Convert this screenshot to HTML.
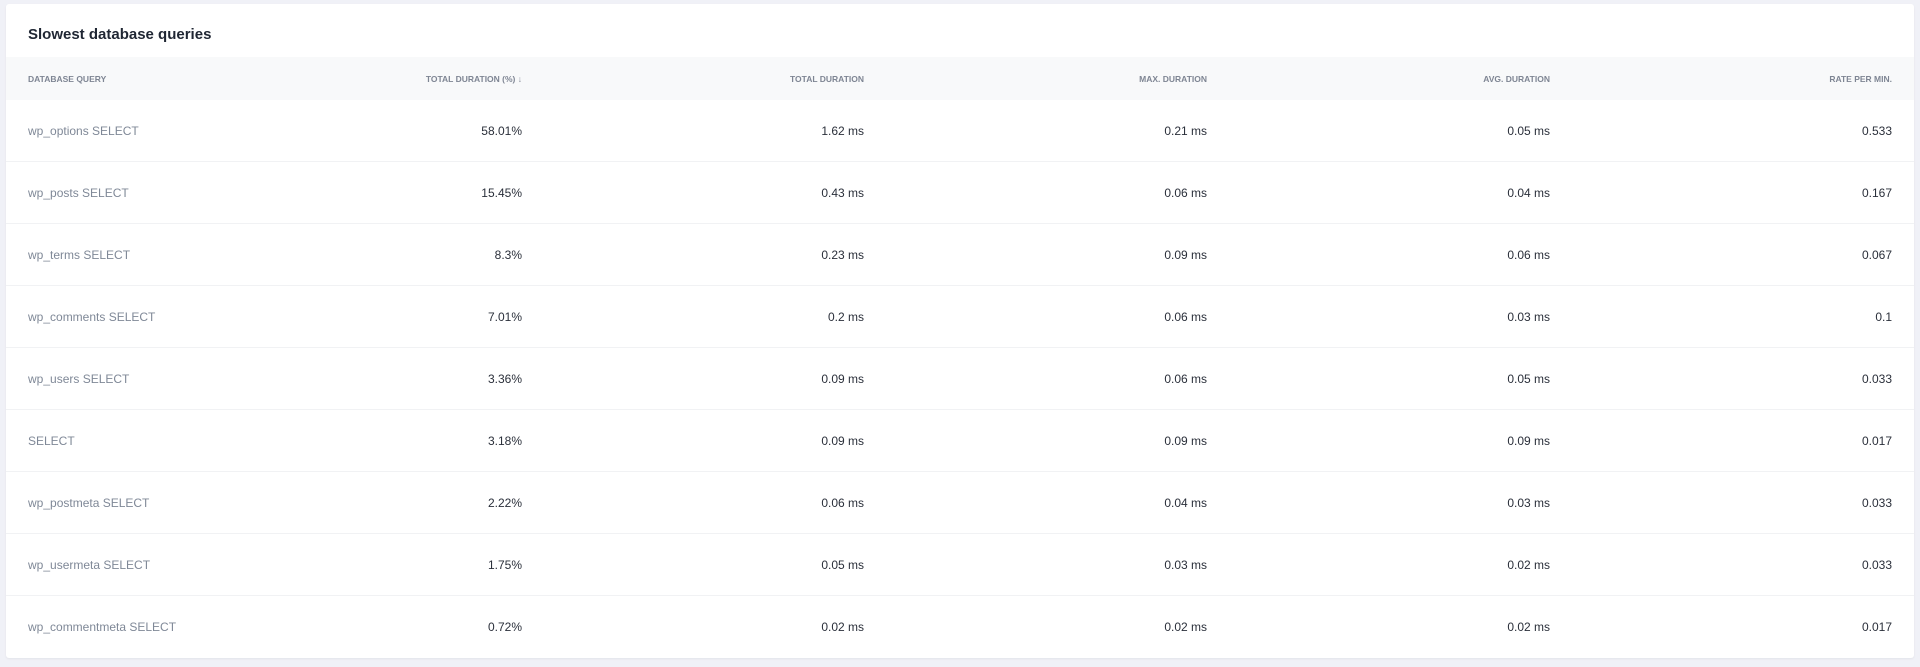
<!DOCTYPE html><html><head><style>
body{margin:0;background:#f0f1f7;width:1920px;height:667px;font-family:"Liberation Sans",sans-serif;overflow:hidden}
.card{position:absolute;left:6px;top:4px;width:1908px;height:654px;background:#fff;border-radius:3px;box-shadow:0 1px 2px rgba(0,0,0,.06)}
h1{margin:0;position:absolute;left:22px;top:22px;font-size:15px;font-weight:bold;color:#1f2633}
table{position:absolute;top:53px;left:0;width:1908px;border-collapse:collapse}
th{height:43px;background:#f8f9fa;font-size:8.5px;font-weight:bold;color:#7e8593;text-transform:uppercase;text-align:right;padding:0}
td{height:61px;border-bottom:1px solid #f1f2f4;font-size:12px;color:#2a2f3a;text-align:right;padding:0}
tr:last-child td{border-bottom:none}
th:first-child,td:first-child{text-align:left;padding-left:22px}
td:first-child{color:#7f8897}
th:last-child,td:last-child{padding-right:22px}
</style></head><body><div class="card"><h1>Slowest database queries</h1>
<table>
<colgroup><col style="width:200px"><col style="width:316px"><col style="width:342px"><col style="width:343px"><col style="width:343px"><col></colgroup>
<tr><th>Database query</th><th>Total duration (%) ↓</th><th>Total duration</th><th>Max. duration</th><th>Avg. duration</th><th>Rate per min.</th></tr>
<tr><td>wp_options SELECT</td><td>58.01%</td><td>1.62 ms</td><td>0.21 ms</td><td>0.05 ms</td><td>0.533</td></tr>
<tr><td>wp_posts SELECT</td><td>15.45%</td><td>0.43 ms</td><td>0.06 ms</td><td>0.04 ms</td><td>0.167</td></tr>
<tr><td>wp_terms SELECT</td><td>8.3%</td><td>0.23 ms</td><td>0.09 ms</td><td>0.06 ms</td><td>0.067</td></tr>
<tr><td>wp_comments SELECT</td><td>7.01%</td><td>0.2 ms</td><td>0.06 ms</td><td>0.03 ms</td><td>0.1</td></tr>
<tr><td>wp_users SELECT</td><td>3.36%</td><td>0.09 ms</td><td>0.06 ms</td><td>0.05 ms</td><td>0.033</td></tr>
<tr><td>SELECT</td><td>3.18%</td><td>0.09 ms</td><td>0.09 ms</td><td>0.09 ms</td><td>0.017</td></tr>
<tr><td>wp_postmeta SELECT</td><td>2.22%</td><td>0.06 ms</td><td>0.04 ms</td><td>0.03 ms</td><td>0.033</td></tr>
<tr><td>wp_usermeta SELECT</td><td>1.75%</td><td>0.05 ms</td><td>0.03 ms</td><td>0.02 ms</td><td>0.033</td></tr>
<tr><td>wp_commentmeta SELECT</td><td>0.72%</td><td>0.02 ms</td><td>0.02 ms</td><td>0.02 ms</td><td>0.017</td></tr>
</table></div></body></html>
